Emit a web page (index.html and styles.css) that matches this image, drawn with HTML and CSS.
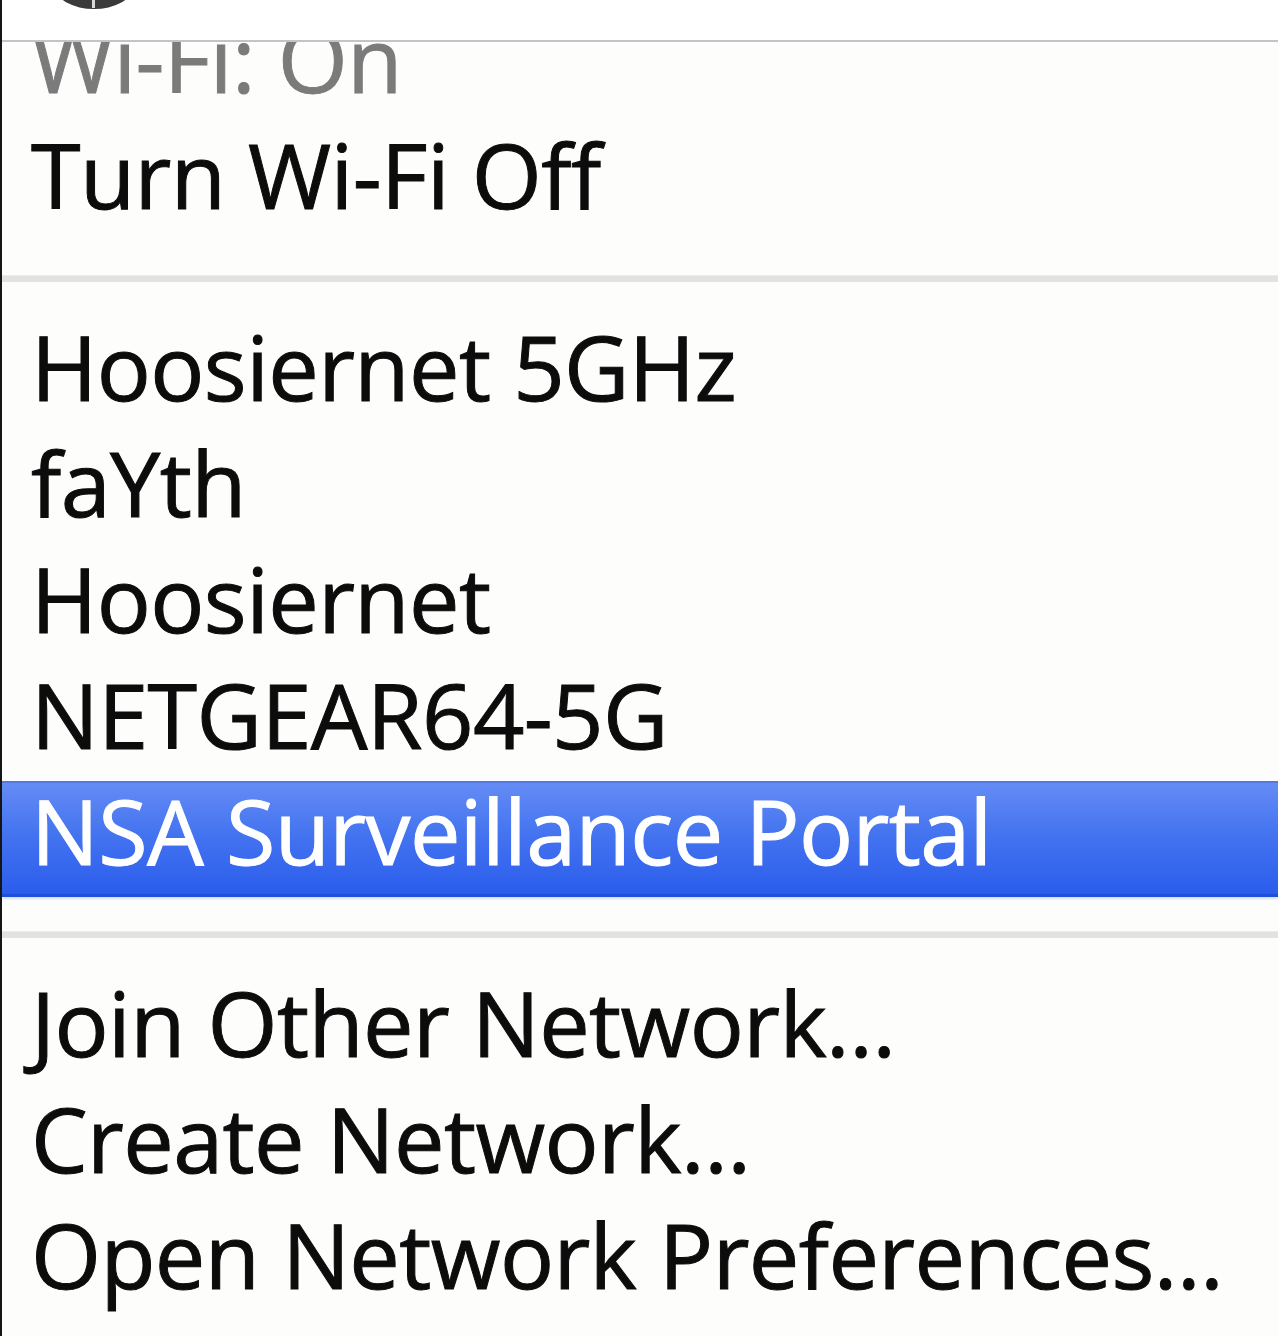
FILE: index.html
```
<!DOCTYPE html>
<html lang="en">
<head>
    <meta charset="UTF-8">
    <meta name="viewport" content="width=device-width, initial-scale=1.0">
    <title>Wi-Fi Menu</title>
    <link rel="stylesheet" href="styles.css">
</head>
<body>

    <div class="screen">
        <div class="menubar">
            <svg class="status-icon" width="80" height="12" viewBox="0 0 80 12">
                <defs>
                    <radialGradient id="knob" cx="50%" cy="0%" r="70%">
                        <stop offset="0%" stop-color="#4a4a4a"/>
                        <stop offset="70%" stop-color="#1e1e1e"/>
                        <stop offset="100%" stop-color="#3a3a3a"/>
                    </radialGradient>
                </defs>
                <ellipse cx="38" cy="-12" rx="38" ry="21" fill="url(#knob)"/>
                <rect x="36" y="0" width="3" height="8" fill="#d8d8d8"/>
            </svg>
        </div>

        <ul class="menu">
            <li class="item dim first">Wi-Fi: On</li>
            <li class="item">Turn Wi-Fi Off</li>
            <li class="sep"></li>
            <li class="item">Hoosiernet 5GHz</li>
            <li class="item">faYth</li>
            <li class="item">Hoosiernet</li>
            <li class="item">NETGEAR64-5G</li>
            <li class="item selected">NSA Surveillance Portal</li>
            <li class="sep"></li>
            <li class="item">Join Other Network…</li>
            <li class="item">Create Network…</li>
            <li class="item">Open Network Preferences…</li>
        </ul>
    </div>

</body>
</html>
```

FILE: styles.css
```
html, body {
    margin: 0;
    background: #fdfdfb;
}

.screen {
    border-left: 2px solid #151515;
    min-height: 1336px;
    box-sizing: border-box;
    font-family: "Open Sans", "Noto Sans", sans-serif;
}

.menubar {
    height: 40px;
    background: #fff;
    border-bottom: 2px solid #c4c4c4;
}

.status-icon {
    display: block;
    margin-left: 54px;
}

.menu {
    list-style-type: none;
    margin: 0;
    padding: 0;
    overflow: hidden;
}

.item {
    height: 116px;
    box-sizing: border-box;
    padding-left: 29px;
    font-size: 90px;
    line-height: 98px;
    letter-spacing: -0.6px;
    color: #0c0c0c;
    -webkit-text-stroke: 1px currentColor;
    white-space: nowrap;
}

.item.first {
    margin-top: -33px;
}

.item.dim {
    color: #7b7b7b;
}

.item.selected {
    color: #fff;
    background: linear-gradient(#658cf5, #4574f0 45%, #2a5dec);
    border-top: 2px solid #5479e4;
    border-bottom: 3px solid #1f50da;
    box-shadow: 0 2px 2px #d3dff8;
    line-height: 94px;
}

.sep {
    height: 76px;
    box-sizing: border-box;
    padding-top: 34px;
}

.sep::after {
    content: "";
    display: block;
    height: 6px;
    background: #e2e2e2;
    border-top: 1px solid #ececec;
}
```
